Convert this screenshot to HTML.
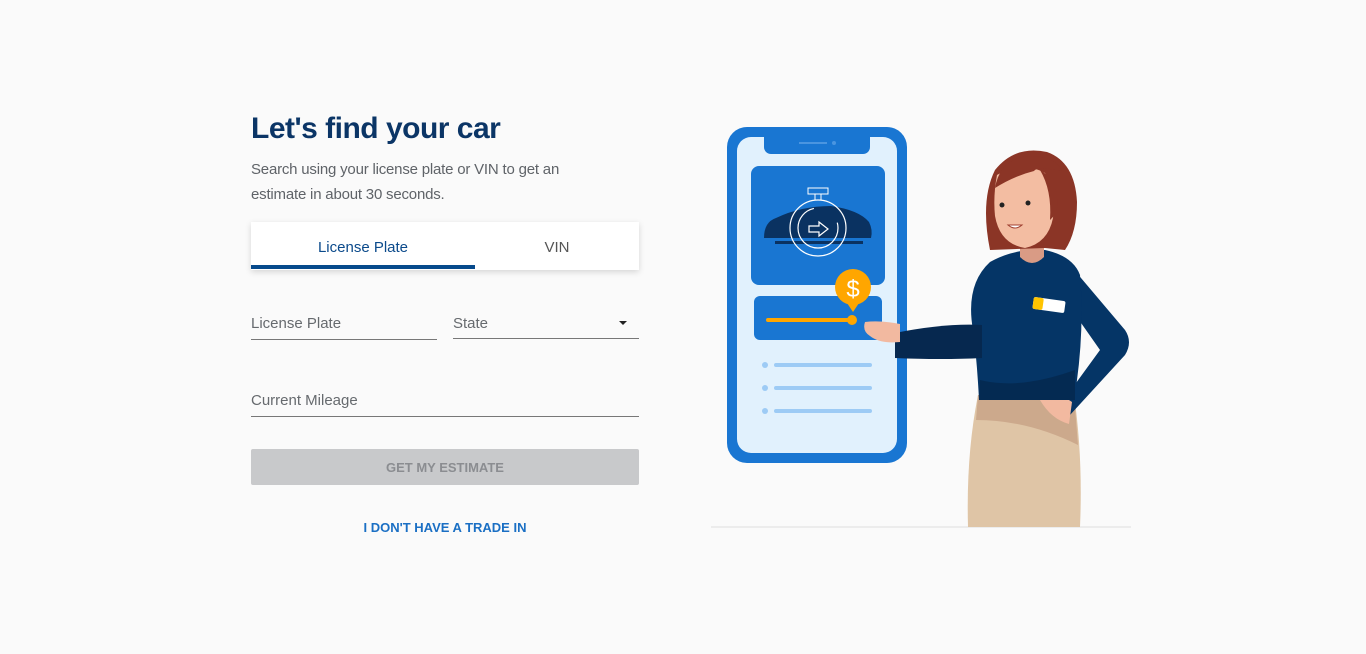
<!DOCTYPE html>
<html><head><meta charset="utf-8"><style>
*{margin:0;padding:0;box-sizing:border-box}
body{width:1366px;height:654px;background:#fafafa;font-family:"Liberation Sans",sans-serif;position:relative;overflow:hidden}
.a{position:absolute}
h1{position:absolute;left:251px;top:112px;font-size:30px;font-weight:bold;color:#0b3566;letter-spacing:-0.5px}
.sub{left:251px;top:157px;width:360px;font-size:15px;line-height:25px;color:#5f6368;letter-spacing:-0.2px}
.tabs{left:251px;top:222px;width:388px;height:48px;background:#fff;box-shadow:0 2px 6px rgba(0,0,0,.15)}
.tab{position:absolute;top:0;height:48px;line-height:52px;text-align:center;font-size:15px;width:224px}
.lbl{font-size:15px;color:#666a6e}
.ul{height:1px;background:#777}
</style></head><body>
<h1>Let's find your car</h1>
<div class="a sub">Search using your license plate or VIN to get an estimate in about 30 seconds.</div>
<div class="a tabs">
<div class="tab" style="left:0;color:#0b4a8b">License Plate</div>
<div class="tab" style="left:224px;width:164px;color:#555">VIN</div>
<div class="a" style="left:0;top:43px;width:224px;height:4px;background:#064a8c"></div>
</div>
<div class="a lbl" style="left:251px;top:315px">License Plate</div>
<div class="a ul" style="left:251px;top:339px;width:186px"></div>
<div class="a lbl" style="left:453px;top:315px">State</div>
<div class="a" style="left:619px;top:321px;border-left:4px solid transparent;border-right:4px solid transparent;border-top:4px solid #222"></div>
<div class="a ul" style="left:453px;top:338px;width:186px"></div>
<div class="a lbl" style="left:251px;top:392px">Current Mileage</div>
<div class="a ul" style="left:251px;top:416px;width:388px"></div>
<div class="a" style="left:251px;top:449px;width:388px;height:36px;background:#c8c9cb;border-radius:2px;color:#8b8d91;font-weight:bold;font-size:13px;text-align:center;line-height:37px">GET MY ESTIMATE</div>
<div class="a" style="left:251px;top:520px;width:388px;text-align:center;color:#1a6fc4;font-weight:bold;font-size:13px">I DON'T HAVE A TRADE IN</div>
<svg class="a" style="left:0;top:0" width="1366" height="654">
<rect x="711" y="526" width="420" height="2" fill="#ececec"/>
<rect x="727" y="127" width="180" height="336" rx="20" fill="#1976d2"/>
<rect x="737" y="137" width="160" height="316" rx="14" fill="#e1f1fd"/>
<path d="M764 137 H870 V147 a7 7 0 0 1 -7 7 H771 a7 7 0 0 1 -7 -7Z" fill="#1976d2"/>
<rect x="799" y="142" width="28" height="2" fill="#4a95e0"/><circle cx="834" cy="143" r="2" fill="#4a95e0"/>
<rect x="751" y="166" width="134" height="119" rx="8" fill="#1976d2"/>
<path d="M764 238 q0-16 12-20 q25-12 55-12 q28 4 38 16 q4 8 2 16 Z" fill="#0a3261"/>
<rect x="775" y="241" width="88" height="3" fill="#0a3261"/>
<circle cx="818" cy="228" r="28" fill="none" stroke="#fff" stroke-width="1.2"/>
<circle cx="818" cy="228" r="20" fill="none" stroke="#fff" stroke-width="1.2" stroke-dasharray="90 30"/>
<rect x="808" y="188" width="20" height="6" fill="none" stroke="#fff"/><rect x="815" y="194" width="6" height="6" fill="none" stroke="#fff"/>
<path d="M809 226 h10 v-4 l9 7 l-9 7 v-4 h-10z" fill="none" stroke="#fff" stroke-width="1.2"/>
<rect x="754" y="296" width="128" height="44" rx="6" fill="#1976d2"/>
<rect x="766" y="318" width="88" height="4" rx="2" fill="#ffa600"/>
<circle cx="852" cy="320" r="5" fill="#ffa600"/>
<circle cx="853" cy="287" r="18" fill="#ffa600"/><path d="M845 300 L853 312 L861 300Z" fill="#ffa600"/>
<text x="853" y="297" font-size="24" fill="#fff" text-anchor="middle" font-family="Liberation Sans">$</text>
<g fill="#9dcbf5"><circle cx="765" cy="365" r="3"/><circle cx="765" cy="388" r="3"/><circle cx="765" cy="411" r="3"/>
<rect x="774" y="363" width="98" height="4" rx="2"/><rect x="774" y="386" width="98" height="4" rx="2"/><rect x="774" y="409" width="98" height="4" rx="2"/></g>
<!-- pants -->
<path d="M978 395 q-12 60 -10 132 h112 q3 -70 -6 -132z" fill="#dfc5a6"/>
<path d="M978 395 h96 l4 50 q-50 -25 -102 -25z" fill="#cca98c"/>
<!-- right arm -->
<path d="M1070 265 l55 65 q8 12 0 25 l-55 60 l-10 -10 l40 -55 l-35 -50z" fill="#053566"/>
<path d="M1040 400 q20 -8 32 2 l-3 22 q-18 -5 -29 -24z" fill="#f2b9a0"/>
<!-- torso -->
<path d="M990 262 q25 -14 55 -12 q28 6 35 25 q5 60 -6 125 h-95 q-2 -40 -6 -70 q-8 -45 17 -68z" fill="#053566"/>
<path d="M980 380 q40 10 95 -10 l0 30 h-96z" fill="#042a52"/>
<!-- left arm -->
<path d="M895 333 q50 -10 87 -8 l0 33 q-40 2 -87 0z" fill="#06284f"/>
<path d="M865 322 q15 -2 35 2 l0 18 q-20 2 -30 -6 q-8 -5 -5 -14z" fill="#f2b9a0"/>
<rect x="1033" y="299" width="32" height="12" rx="2" fill="#fff" transform="rotate(8 1049 305)"/><rect x="1033" y="299" width="10" height="12" rx="2" fill="#ffc400" transform="rotate(8 1049 305)"/>
<!-- neck -->
<path d="M1020 235 h24 v22 q-12 12 -24 0z" fill="#d99b85"/>
<!-- hair back -->
<path d="M990 250 q-10 -50 5 -80 q20 -25 52 -18 q28 10 30 50 q0 30 -12 48 l-20 -2 z" fill="#8b3526"/>
<!-- face -->
<path d="M997 175 q25 -15 48 -2 q10 20 8 45 q-5 25 -28 30 q-25 -4 -30 -32 q-2 -20 2 -41z" fill="#f3bda2"/>
<path d="M995 188 q5 -30 35 -32 q25 0 32 15 q-25 -5 -28 0 q-20 5 -39 17z" fill="#8b3526"/>
<path d="M1040 170 q12 20 10 50 q6 -5 8 -15 q0 -25 -18 -35z" fill="#8b3526"/>
<circle cx="1002" cy="205" r="2.5" fill="#222"/><circle cx="1028" cy="203" r="2.5" fill="#222"/>
<path d="M1008 225 q7 6 14 0z" fill="#fff" stroke="#a04030"/>
</svg>
</body></html>
